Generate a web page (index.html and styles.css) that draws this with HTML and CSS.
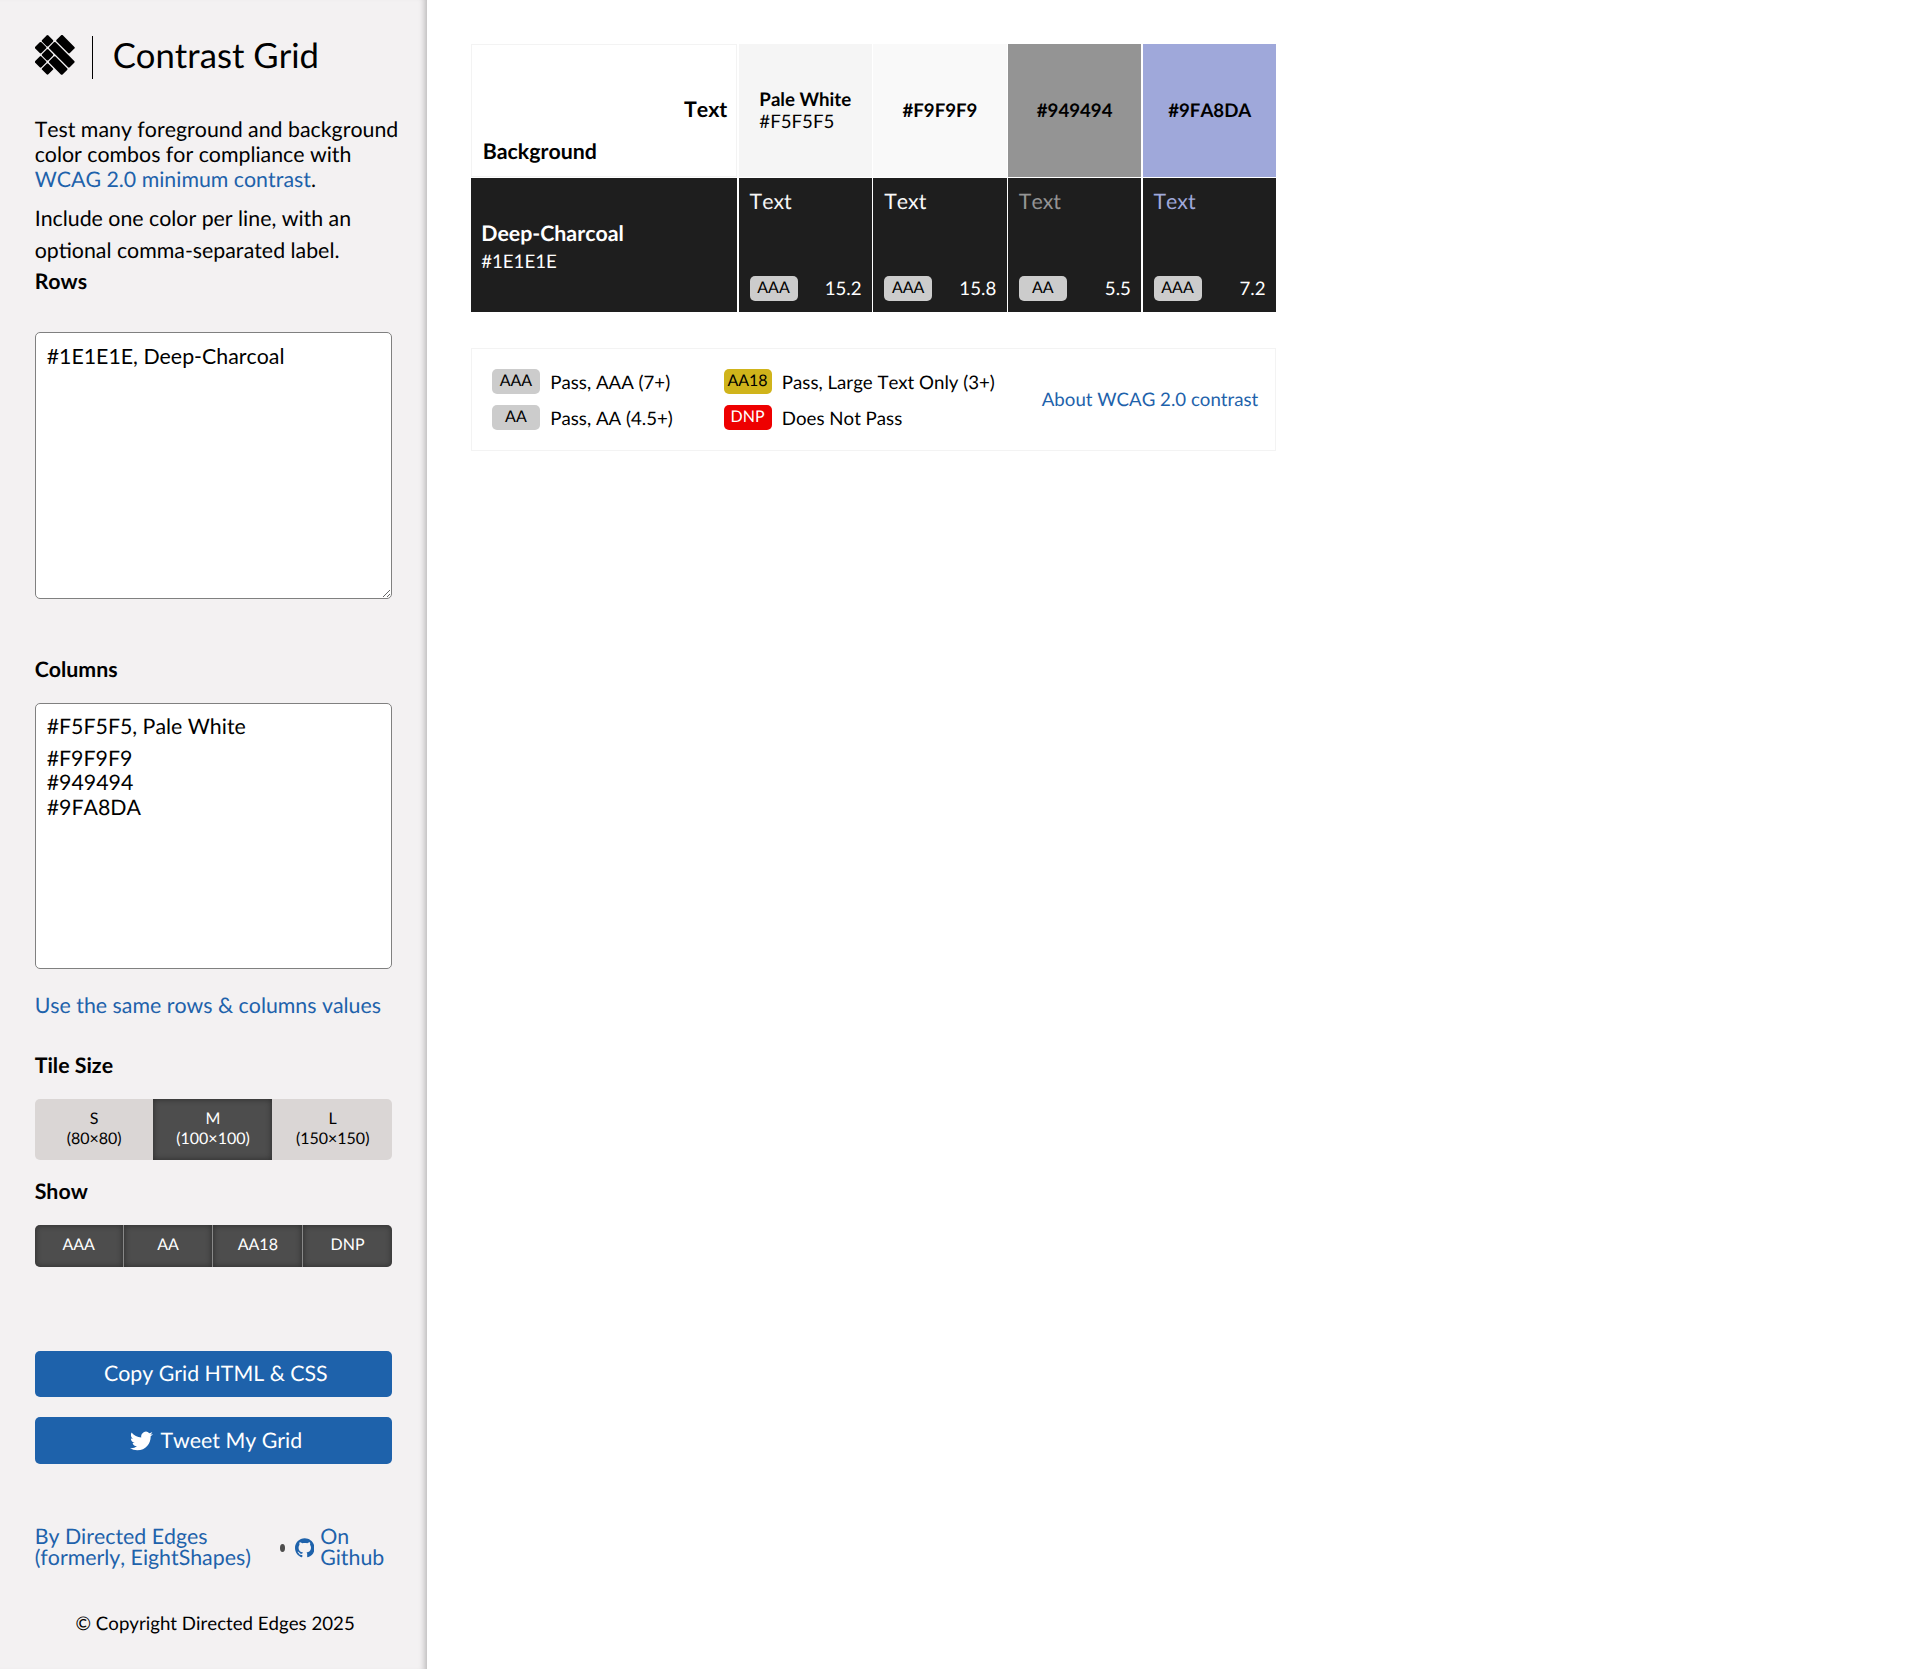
FILE: index.html
```html
<!DOCTYPE html>
<html lang="en">
<head>
<meta charset="utf-8">
<title>Contrast Grid</title>
<link rel="stylesheet" href="styles.css">
</head>
<body>
<div class="app">
  <aside class="sidebar">
    <header class="brand">
      <svg class="logo" viewBox="0 0 40 40" aria-hidden="true">
        <rect x="-4.4" y="-4.4" width="8.8" height="8.8" rx="1.2" transform="translate(12.5 5.8) rotate(45)"/>
        <rect x="-4.4" y="-4.4" width="8.8" height="8.8" rx="1.2" transform="translate(5.6 12.7) rotate(45)"/>
        <rect x="-4.4" y="-4.4" width="8.8" height="8.8" rx="1.2" transform="translate(12.5 19.8) rotate(45)"/>
        <rect x="-4.4" y="-4.4" width="8.8" height="8.8" rx="1.2" transform="translate(5.6 26.9) rotate(45)"/>
        <rect x="-4.4" y="-4.4" width="8.8" height="8.8" rx="1.2" transform="translate(12.5 34) rotate(45)"/>
        <rect x="-9.4" y="-4.4" width="18.8" height="8.8" rx="1.2" transform="translate(30.5 9.2) rotate(45)"/>
        <rect x="-14.4" y="-4.4" width="28.8" height="8.8" rx="1.2" transform="translate(26.8 19.8) rotate(45)"/>
        <rect x="-9.4" y="-4.4" width="18.8" height="8.8" rx="1.2" transform="translate(23.2 30.5) rotate(45)"/>
      </svg>
      <h1 class="title">Contrast Grid</h1>
    </header>
    <p class="intro">Test many foreground and background color combos for compliance with <a href="#">WCAG 2.0 minimum contrast</a>.</p>
    <p class="hint">Include one color per line, with an optional comma-separated label.</p>

    <label class="label label-rows" for="rows">Rows</label>
    <textarea class="field" id="rows" spellcheck="false">#1E1E1E, Deep-Charcoal</textarea>

    <div class="label label-columns">Columns</div>
    <div class="field columns" contenteditable="true" spellcheck="false"><div class="lead">#F5F5F5, Pale White</div><div>#F9F9F9</div><div>#949494</div><div>#9FA8DA</div></div>
    <a class="same" href="#">Use the same rows &amp; columns values</a>

    <div class="label label-size">Tile Size</div>
    <div class="segments sizes">
      <div class="segment">S<br>(80×80)</div>
      <div class="segment on">M<br>(100×100)</div>
      <div class="segment">L<br>(150×150)</div>
    </div>

    <div class="label label-show">Show</div>
    <div class="segments levels">
      <div class="segment on">AAA</div>
      <div class="segment on">AA</div>
      <div class="segment on">AA18</div>
      <div class="segment on">DNP</div>
    </div>

    <div class="actions">
      <a class="button copy" href="#">Copy Grid HTML &amp; CSS</a>
      <a class="button tweet" href="#"><svg class="bird" viewBox="0 0 24 20" aria-hidden="true"><path d="M23.95 2.57a10 10 0 0 1-2.82.77 4.96 4.96 0 0 0 2.16-2.72c-.95.55-2 .96-3.13 1.18a4.92 4.92 0 0 0-8.38 4.48C7.69 6.09 4.07 4.13 1.64 1.16a4.82 4.82 0 0 0-.67 2.48c0 1.71.87 3.21 2.19 4.1a4.9 4.9 0 0 1-2.23-.62v.06a4.92 4.92 0 0 0 3.95 4.83 5 5 0 0 1-2.21.08 4.94 4.94 0 0 0 4.6 3.42A9.87 9.87 0 0 1 0 17.54a14 14 0 0 0 7.56 2.21c9.05 0 14-7.5 14-13.99 0-.21 0-.42-.02-.63a9.94 9.94 0 0 0 2.46-2.55z"/></svg>Tweet My Grid</a>
    </div>

    <footer class="footer">
      <a class="author" href="#">By Directed Edges<br>(formerly, EightShapes)</a>
      <span class="dot"></span>
      <a class="github" href="#"><svg class="octocat" viewBox="0 0 16 16" aria-hidden="true"><path d="M8 0C3.58 0 0 3.58 0 8c0 3.54 2.29 6.53 5.47 7.59.4.07.55-.17.55-.38 0-.19-.01-.82-.01-1.49-2.01.37-2.53-.49-2.69-.94-.09-.23-.48-.94-.82-1.13-.28-.15-.68-.52-.01-.53.63-.01 1.08.58 1.23.82.72 1.21 1.87.87 2.33.66.07-.52.28-.87.51-1.07-1.78-.2-3.64-.89-3.64-3.95 0-.87.31-1.59.82-2.15-.08-.2-.36-1.02.08-2.12 0 0 .67-.21 2.2.82.64-.18 1.32-.27 2-.27s1.36.09 2 .27c1.53-1.04 2.2-.82 2.2-.82.44 1.1.16 1.92.08 2.12.51.56.82 1.27.82 2.15 0 3.07-1.87 3.75-3.65 3.95.29.25.54.73.54 1.48 0 1.07-.01 1.93-.01 2.2 0 .21.15.46.55.38A8.01 8.01 0 0 0 16 8c0-4.42-3.58-8-8-8z"/></svg><span>On<br>Github</span></a>
    </footer>
    <p class="copyright">© Copyright Directed Edges 2025</p>
  </aside>

  <main class="main">
    <div class="grid">
      <div class="corner"><span class="corner-text">Text</span><span>Background</span></div>
      <div class="head pale"><div><b>Pale White</b><br>#F5F5F5</div></div>
      <div class="head snow"><b>#F9F9F9</b></div>
      <div class="head gray"><b>#949494</b></div>
      <div class="head iris"><b>#9FA8DA</b></div>
      <div class="row-head"><b>Deep-Charcoal</b><span>#1E1E1E</span></div>
      <div class="tile"><div class="sample on-pale">Text</div><div class="score"><span class="badge">AAA</span>15.2</div></div>
      <div class="tile"><div class="sample on-snow">Text</div><div class="score"><span class="badge">AAA</span>15.8</div></div>
      <div class="tile"><div class="sample on-gray">Text</div><div class="score"><span class="badge">AA</span>5.5</div></div>
      <div class="tile"><div class="sample on-iris">Text</div><div class="score"><span class="badge">AAA</span>7.2</div></div>
    </div>
    <div class="legend">
      <div class="key"><span class="badge">AAA</span>Pass, AAA (7+)</div>
      <div class="key"><span class="badge large">AA18</span>Pass, Large Text Only (3+)</div>
      <a class="about" href="#">About WCAG 2.0 contrast</a>
      <div class="key"><span class="badge">AA</span>Pass, AA (4.5+)</div>
      <div class="key"><span class="badge fail">DNP</span>Does Not Pass</div>
    </div>
  </main>
</div>
</body>
</html>
```
FILE: styles.css
```css
* { box-sizing: border-box; }
body {
  margin: 0;
  background: #fff;
  color: #000;
  font-family: Lato, "Open Sans", sans-serif;
  font-size: 21.33px;
  line-height: 32px;
  font-kerning: none;
  text-rendering: geometricPrecision;
}
a { color: #1e62ab; text-decoration: none; }
p { margin: 0; }
.app { display: flex; min-height: 1669px; }

/* Sidebar */
.sidebar {
  width: 426.67px;
  flex: none;
  padding: 35px 26px 0 34.67px;
  background: #f3f1f2;
  box-shadow: inset -7px 0 6px -5px rgba(0, 0, 0, .25);
}
.brand { display: flex; height: 82px; }
.logo { width: 40px; height: 40px; flex: none; }
.title {
  margin: 1px 0 0 17px;
  padding-left: 20px;
  height: 43px;
  border-left: 1.33px solid #000;
  font-size: 34.67px;
  line-height: 39px;
  font-weight: 400;
}
.intro { line-height: 25.2px; }
.hint { margin-top: 9.4px; }
.label { font-weight: 700; display: block; line-height: 32px; }
.label-rows { margin-top: -1.3px; }
.field {
  display: block;
  width: 357.33px;
  height: 266.67px;
  margin: 0;
  padding: 7px 11px;
  border: 1px solid #808080;
  border-radius: 5px;
  background: #fff;
  color: #000;
  font: inherit;
  font-kerning: none;
  outline: none;
}
.label-rows + .field { margin-top: 35.3px; }
.label-columns { margin-top: 54px; }
.columns { margin-top: 18px; padding-top: 6.3px; line-height: 24.6px; }
.columns .lead { line-height: 32px; padding-bottom: 3.7px; }
.same { display: block; margin-top: 19.3px; }
.label-size { margin-top: 28.7px; }
.segments {
  display: flex;
  width: 357.33px;
  border-radius: 5px;
  overflow: hidden;
  background: #dad6d5;
  font-size: 16px;
  line-height: 20.6px;
  text-align: center;
}
.segment { flex: 1; }
.segment.on { background: #4d4d4d; color: #fff; box-shadow: inset 0 0 6px rgba(0, 0, 0, .45); }
.segment.on + .segment.on { border-left: 1px solid #888; }
.sizes { margin-top: 17.5px; height: 61.67px; }
.sizes .segment { padding: 10px 0 0 1px; }
.sizes .segment:first-child { flex: 0 0 118px; }
.label-show { margin-top: 14.5px; }
.levels { margin-top: 18.3px; height: 41.4px; }
.levels .segment { padding-top: 9.5px; }
.levels .segment:first-child { flex: 0 0 88px; }
.actions { margin-top: 84.3px; display: grid; gap: 20px; width: 357.33px; }
.button {
  display: flex;
  height: 46.4px;
  padding-bottom: 1px;
  align-items: center;
  justify-content: center;
  gap: 8px;
  border-radius: 5px;
  background: #1e62ab;
  color: #fff;
}
.copy { padding: 0 0 2.5px 5px; }
.tweet { padding-left: 5px; }
.bird { width: 23px; height: 20px; fill: #fff; margin-top: 2px; }
.footer { display: flex; align-items: center; width: 357px; margin-top: 62.5px; line-height: 21px; }
.author { width: 245px; white-space: nowrap; }
.dot { width: 5px; height: 8px; margin-top: 1px; border-radius: 50%; background: #4d4d4d; }
.github { display: flex; align-items: center; gap: 6px; margin-left: 10px; }
.octocat { width: 19.5px; height: 20px; margin-top: 1.5px; fill: #1e62ab; }
.copyright { margin-top: 38.7px; width: 361px; text-align: center; font-size: 18.67px; }

/* Grid */
.main { padding: 44px 0 0 44px; }
.grid {
  display: grid;
  grid-template-columns: 266.67px repeat(4, 133.33px);
  grid-template-rows: 133px 133.5px;
  gap: 1.33px;
}
.corner { display: flex; flex-direction: column; padding: 48px 9px 0 11px; border: 1px solid #f3f3f3; font-weight: 700; }
.corner-text { align-self: flex-end; margin-bottom: 10px; }
.head { display: flex; align-items: center; justify-content: center; padding-bottom: 1.7px; font-size: 18.67px; line-height: 22px; }
.pale { background: #f5f5f5; }
.snow { background: #f9f9f9; }
.gray { background: #949494; }
.iris { background: #9fa8da; padding-left: 1px; }
.row-head { display: flex; flex-direction: column; padding: 38.3px 10.5px 0; background: #1e1e1e; color: #fff; }
.row-head span { font-size: 18.67px; line-height: 24px; }
.tile { display: flex; flex-direction: column; justify-content: space-between; padding: 6.8px 10.4px 10.4px 10.9px; background: #1e1e1e; color: #fff; }
.on-pale { color: #f5f5f5; }
.on-snow { color: #f9f9f9; }
.on-gray { color: #949494; }
.on-iris { color: #9fa8da; }
.score { display: flex; justify-content: space-between; align-items: center; font-size: 18.67px; line-height: 25px; }
.badge {
  width: 48px;
  height: 25.33px;
  border-radius: 5px;
  background: #ccc;
  color: #000;
  font-size: 16px;
  line-height: 23.4px;
  text-align: center;
}
.large { background: #d0b41b; }
.fail { background: #ee0000; color: #fff; }

/* Legend */
.legend {
  display: grid;
  grid-template-columns: 231.6px 318.2px auto;
  grid-template-rows: 25.33px 25.33px;
  row-gap: 10.67px;
  width: 805px;
  height: 103.3px;
  margin-top: 36.2px;
  padding: 20px 0 0 20.3px;
  border: 1px solid #f3f3f3;
  font-size: 18.67px;
  line-height: 27px;
}
.key { display: flex; gap: 10.3px; white-space: nowrap; }
.about { grid-row: span 2; grid-column: 3; align-self: center; padding-bottom: 1px; white-space: nowrap; }
```
